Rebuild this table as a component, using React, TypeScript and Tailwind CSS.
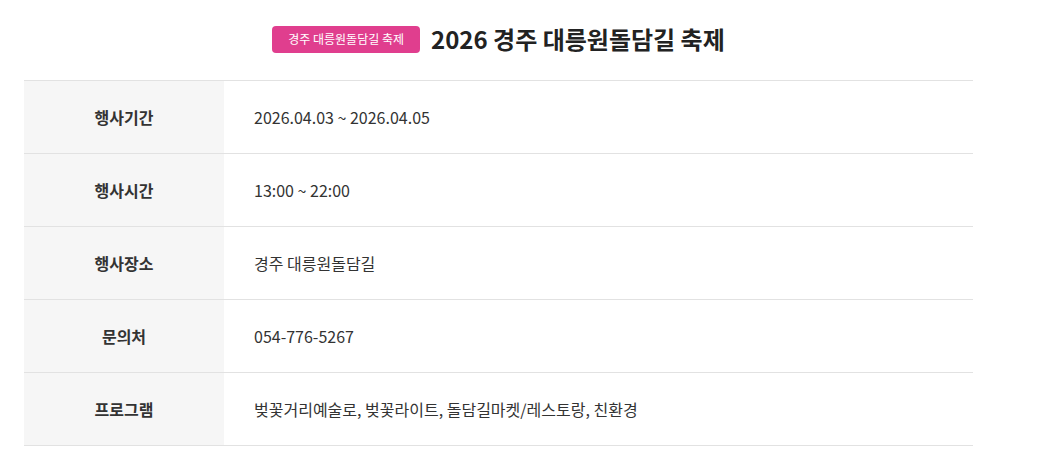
import React from 'react';

const rows = [
    { label: '행사기간', value: '2026.04.03 ~ 2026.04.05' },
    { label: '행사시간', value: '13:00 ~ 22:00' },
    { label: '행사장소', value: '경주 대릉원돌담길' },
    { label: '문의처', value: '054-776-5267' },
    { label: '프로그램', value: '벚꽃거리예술로, 벚꽃라이트, 돌담길마켓/레스토랑, 친환경' },
];

const App = () => {
    return (
        <div
            className="w-[1042px] min-h-[463px] bg-white text-[#333]"
            style={{ fontFamily: '"Noto Sans CJK KR", "Noto Sans", sans-serif' }}>
            <div className="ml-[24px] w-[949px]">
                <div className="flex items-center justify-center h-[80px] pb-[2px]">
                    <span className="h-[27px] px-[16px] flex items-center rounded-[4px] bg-[#e03e8e] text-white text-[12px]">
                        경주 대릉원돌담길 축제
                    </span>
                    <h1 className="ml-[11px] text-[24px] font-bold text-[#222] leading-none">
                        2026 경주 대릉원돌담길 축제
                    </h1>
                </div>
                <div className="border-t border-[#e2e2e2]">
                    {rows.map((row) => (
                        <div key={row.label} className="flex h-[73px] border-b border-[#e2e2e2]">
                            <div className="w-[200px] bg-[#f6f6f6] flex items-center justify-center text-[16px] font-bold text-[#333]">
                                {row.label}
                            </div>
                            <div className="flex-1 flex items-center pl-[30px] text-[16px] text-[#333]">
                                {row.value}
                            </div>
                        </div>
                    ))}
                </div>
            </div>
        </div>
    );
};

export default App;
